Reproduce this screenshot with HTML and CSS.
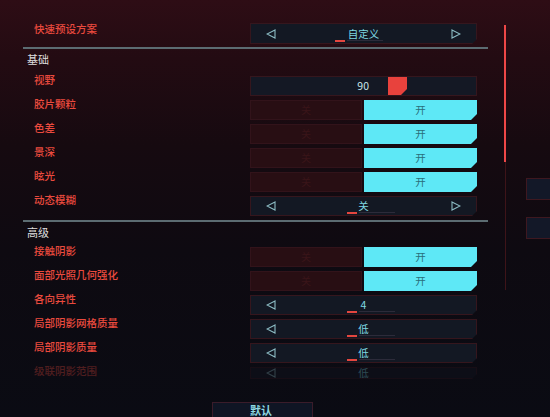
FILE: index.html
```html
<!DOCTYPE html>
<html lang="zh">
<head>
<meta charset="utf-8">
<link rel="stylesheet" href="styles.css">
</head>
<body>
<div class="screen">
  <div class="panel">
    <div class="row first">
      <div class="label">快速预设方案</div>
      <div class="ctl sel tall">
        <svg class="arr" viewBox="0 0 10 10"><polygon points="9,1 1,5 9,9"/></svg>
        <span class="val">自定义</span>
        <svg class="arr" viewBox="0 0 10 10"><polygon points="1,1 9,5 1,9"/></svg>
        <span class="mark wide"></span>
      </div>
    </div>
    <div class="sep"></div>
    <div class="heading">基础</div>
    <div class="row">
      <div class="label">视野</div>
      <div class="ctl slider"><span class="num">90</span><span class="handle"></span></div>
    </div>
    <div class="row">
      <div class="label">胶片颗粒</div>
      <div class="ctl tog"><span class="off">关</span><span class="on">开</span></div>
    </div>
    <div class="row">
      <div class="label">色差</div>
      <div class="ctl tog"><span class="off">关</span><span class="on">开</span></div>
    </div>
    <div class="row">
      <div class="label">景深</div>
      <div class="ctl tog"><span class="off">关</span><span class="on">开</span></div>
    </div>
    <div class="row">
      <div class="label">眩光</div>
      <div class="ctl tog"><span class="off">关</span><span class="on">开</span></div>
    </div>
    <div class="row">
      <div class="label">动态模糊</div>
      <div class="ctl sel">
        <svg class="arr" viewBox="0 0 10 10"><polygon points="9,1 1,5 9,9"/></svg>
        <span class="val">关</span>
        <svg class="arr" viewBox="0 0 10 10"><polygon points="1,1 9,5 1,9"/></svg>
        <span class="mark"></span>
      </div>
    </div>
    <div class="sep"></div>
    <div class="heading h2">高级</div>
    <div class="row">
      <div class="label">接触阴影</div>
      <div class="ctl tog"><span class="off">关</span><span class="on">开</span></div>
    </div>
    <div class="row">
      <div class="label">面部光照几何强化</div>
      <div class="ctl tog"><span class="off">关</span><span class="on">开</span></div>
    </div>
    <div class="row">
      <div class="label">各向异性</div>
      <div class="ctl sel">
        <svg class="arr" viewBox="0 0 10 10"><polygon points="9,1 1,5 9,9"/></svg>
        <span class="val">4</span>
        <svg class="arr hide" viewBox="0 0 10 10"><polygon points="1,1 9,5 1,9"/></svg>
        <span class="mark"></span>
      </div>
    </div>
    <div class="row">
      <div class="label">局部阴影网格质量</div>
      <div class="ctl sel">
        <svg class="arr" viewBox="0 0 10 10"><polygon points="9,1 1,5 9,9"/></svg>
        <span class="val">低</span>
        <svg class="arr hide" viewBox="0 0 10 10"><polygon points="1,1 9,5 1,9"/></svg>
        <span class="mark"></span>
      </div>
    </div>
    <div class="row">
      <div class="label">局部阴影质量</div>
      <div class="ctl sel">
        <svg class="arr" viewBox="0 0 10 10"><polygon points="9,1 1,5 9,9"/></svg>
        <span class="val">低</span>
        <svg class="arr hide" viewBox="0 0 10 10"><polygon points="1,1 9,5 1,9"/></svg>
        <span class="mark"></span>
      </div>
    </div>
    <div class="row faded">
      <div class="label">级联阴影范围</div>
      <div class="ctl sel short">
        <svg class="arr" viewBox="0 0 10 10"><polygon points="9,1 1,5 9,9"/></svg>
        <span class="val">低</span>
        <svg class="arr hide" viewBox="0 0 10 10"><polygon points="1,1 9,5 1,9"/></svg>
      </div>
    </div>
    <div class="footer"><div class="btn">默认</div></div>
  </div>
  <div class="scroll"><div class="thumb"></div><div class="track"></div></div>
  <div class="side">
    <div class="box"></div>
    <div class="box"></div>
  </div>
</div>
</body>
</html>
```

FILE: styles.css
```css
* { box-sizing: border-box; }
html, body { margin: 0; padding: 0; }
body {
  width: 550px;
  height: 417px;
  overflow: hidden;
  font-family: "Noto Sans CJK SC", "Noto Sans", sans-serif;
  background: #0b0b12;
}
.screen {
  width: 550px;
  height: 417px;
  display: flex;
  overflow: hidden;
  background: linear-gradient(180deg, #2e0d15 0%, #230b12 14%, #160a10 35%, #0e0a11 60%, #0a0b13 100%);
}
.panel {
  margin-left: 23px;
  width: 467px;
  padding-top: 23px;
  display: flex;
  flex-direction: column;
}
.row {
  display: flex;
  align-items: flex-start;
  height: 24px;
  flex: 0 0 24px;
}
.label {
  width: 227px;
  padding-left: 11px;
  margin-top: -3px;
  font-size: 10.5px;
  line-height: 14px;
  font-weight: 500;
  color: #ea4a3e;
  white-space: nowrap;
}
.row.first .label { margin-top: -1px; }
.ctl {
  width: 227px;
  height: 20px;
  position: relative;
}
.ctl.tall { height: 21px; }
.sep {
  height: 2px;
  flex: 0 0 2px;
  background: #5c6c72;
}
.heading {
  height: 27px;
  flex: 0 0 27px;
  padding-top: 3px;
  padding-left: 4px;
  font-size: 11px;
  line-height: 14px;
  color: #dedede;
}
.heading.h2 { height: 25px; flex-basis: 25px; }

/* selector */
.sel {
  display: flex;
  align-items: center;
  justify-content: space-between;
  padding: 0 15px;
  background: #131823;
  border: 1px solid #35161d;
  clip-path: polygon(0 0, 100% 0, 100% calc(100% - 5px), calc(100% - 5px) 100%, 0 100%);
}
.arr {
  width: 10px;
  height: 10px;
  fill: none;
  stroke: #8cbcc4;
  stroke-width: 1.1;
}
.arr.hide { visibility: hidden; }
.val {
  font-size: 10.5px;
  line-height: 14px;
  color: #7fd9e2;
}
.mark {
  position: absolute;
  left: 96px;
  bottom: 1px;
  width: 10px;
  height: 2px;
  background: #e4463f;
}
.mark::after {
  content: "";
  position: absolute;
  left: 12px;
  top: 0;
  width: 36px;
  height: 1px;
  background: #2c2b3a;
}
.mark.wide { left: 84px; }

/* slider */
.slider {
  display: flex;
  align-items: stretch;
  background: #141824;
  border: 1px solid #35161d;
}
.num {
  width: 118px;
  text-align: right;
  font-size: 10.5px;
  line-height: 18px;
  color: #c9e6ea;
}
.handle {
  margin-left: 19px;
  width: 19px;
  background: #e8423d;
  clip-path: polygon(0 0, 100% 0, 100% calc(100% - 6px), calc(100% - 6px) 100%, 0 100%);
}

/* toggle */
.tog {
  display: flex;
  gap: 2px;
}
.off {
  flex: 0 0 112px;
  background: #280e13;
  border: 1px solid #32131a;
  color: #3a1519;
  font-size: 10px;
  line-height: 18px;
  text-align: center;
}
.on {
  flex: 1;
  background: #5ee8f6;
  color: #2a6f7a;
  font-size: 10.5px;
  line-height: 20px;
  text-align: center;
  clip-path: polygon(0 0, 100% 0, 100% calc(100% - 6px), calc(100% - 6px) 100%, 0 100%);
}

.row.faded {
  height: 14px;
  flex-basis: 14px;
  opacity: 0.3;
}
.sel.short { height: 12px; }

.footer {
  margin-top: 21px;
  padding-left: 189px;
}
.btn {
  width: 101px;
  height: 20px;
  background: #0f1524;
  border: 1px solid #3a1c2a;
  border-bottom: none;
  padding-left: 37px;
  padding-top: 1px;
  font-size: 11px;
  line-height: 13px;
  font-weight: bold;
  color: #8ed8e2;
}

/* scrollbar */
.scroll {
  margin-left: 16px;
  padding-top: 25px;
  width: 2px;
  display: flex;
  flex-direction: column;
}
.thumb {
  width: 2px;
  height: 137px;
  background: #ee4747;
}
.track {
  width: 1px;
  height: 128px;
  margin-left: 0.5px;
  background: #3e1419;
}

/* right side boxes */
.side {
  margin-left: 20px;
  padding-top: 178px;
  display: flex;
  flex-direction: column;
  gap: 17px;
}
.box {
  width: 24px;
  height: 22px;
  background: #131828;
  border: 1px solid #3e1820;
  border-right: none;
}
```
